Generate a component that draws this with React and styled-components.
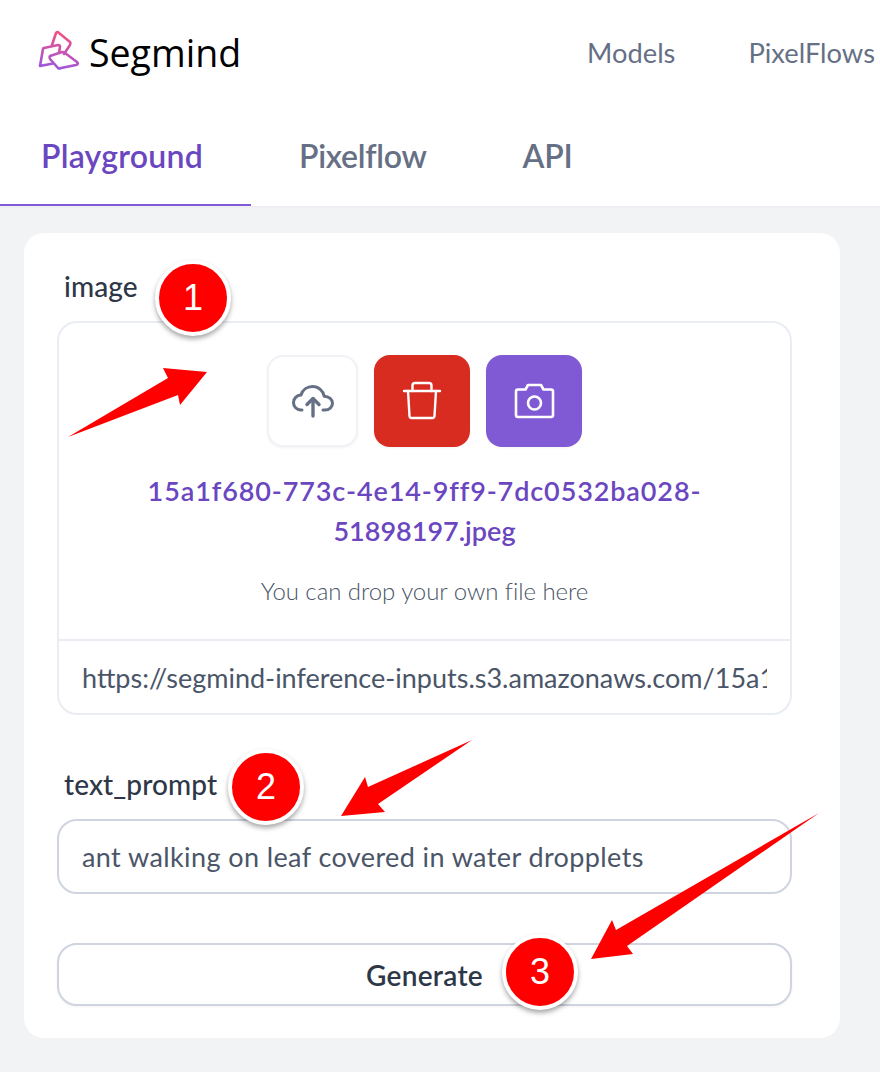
import styled, { createGlobalStyle } from "styled-components";

const GlobalStyle = createGlobalStyle`
	html, body {
		margin: 0;
		padding: 0;
		background: #fff;
	}
	* {
		box-sizing: border-box;
	}
`;

const Page = styled.div`
	position: relative;
	width: 880px;
	height: 1072px;
	overflow: hidden;
	font-family: "Lato", "Open Sans", sans-serif;
	color: #2d3748;
	background: #fff;
`;

const Header = styled.header`
	display: flex;
	align-items: center;
	justify-content: space-between;
	height: 106px;
	padding: 0 5px 2px 38px;
`;

const Brand = styled.div`
	display: flex;
	align-items: center;
	gap: 9px;
	font-family: "Open Sans", sans-serif;
	font-size: 37.5px;
	color: #000;
`;

const Nav = styled.nav`
	display: flex;
	gap: 73px;
	font-size: 27.3px;
	color: #667085;
`;

const TabStrip = styled.div`
	display: flex;
	height: 102px;
	border-bottom: 2px solid #edeff3;
`;

const Tab = styled.div`
	height: 100px;
	margin-bottom: -2px;
	padding: 30px 48px 0;
	font-size: 32px;
	font-weight: 600;
	letter-spacing: ${(p) => (p.$active ? "0.25px" : "-0.3px")};
	color: ${(p) => (p.$active ? "#6b46c1" : "#667085")};
	border-bottom: 2px solid ${(p) => (p.$active ? "#805ad5" : "transparent")};

	&:first-child {
		padding-left: 41px;
	}
`;

const Main = styled.main`
	height: 864px;
	padding: 25px 40px 34px 24px;
	background: #f2f3f5;
`;

const Card = styled.section`
	display: flex;
	flex-direction: column;
	height: 805px;
	padding: 34px 48px 0 33px;
	background: #fff;
	border-radius: 20px;
`;

const Label = styled.label`
	height: 54px;
	padding: 0 7px;
	font-size: 28px;
	font-weight: 500;
	letter-spacing: 0.1px;
	line-height: 38px;
	color: #2d3748;
`;

const DropBox = styled.div`
	display: flex;
	flex-direction: column;
	height: 394px;
	margin-bottom: 50px;
	border: 2px solid #e9edf3;
	border-radius: 20px;
`;

const DropArea = styled.div`
	display: flex;
	flex: 1;
	flex-direction: column;
	align-items: center;
	padding-top: 32px;
	border-bottom: 2px solid #e9edf3;
`;

const IconRow = styled.div`
	display: flex;
	gap: 16px;
	margin-bottom: 24px;
`;

const IconButton = styled.button`
	display: flex;
	align-items: center;
	justify-content: center;
	width: ${(p) => (p.$variant === "upload" ? "91px" : "96px")};
	height: 92px;
	padding: 0;
	color: ${(p) => (p.$variant === "upload" ? "#667085" : "#fff")};
	background: ${(p) =>
		p.$variant === "delete" ? "#d82c20" : p.$variant === "capture" ? "#805ad5" : "#fff"};
	border: ${(p) => (p.$variant === "upload" ? "2px solid #f0f2f6" : "none")};
	border-radius: 16px;
	box-shadow: 0 1px 3px rgba(0, 0, 0, 0.05);
`;

const FileName = styled.div`
	width: 620px;
	font-size: 27px;
	font-weight: 600;
	line-height: 40px;
	text-align: center;
	color: #6b46c1;
`;

const FileLine = styled.div`
	letter-spacing: ${(p) => p.$tracking || 0}px;
`;

const Hint = styled.div`
	margin-top: 22px;
	font-size: 24px;
	font-weight: 300;
	letter-spacing: -0.05px;
	line-height: 36px;
	color: #4a5568;
`;

const TextField = styled.input`
	width: 100%;
	height: ${(p) => (p.$bordered ? "75px" : "72px")};
	padding: 0 23px;
	font-family: inherit;
	font-size: 27px;
	letter-spacing: ${(p) => (p.$bordered ? "0.4px" : "0")};
	color: #4a5568;
	background: transparent;
	border: ${(p) => (p.$bordered ? "2px solid #cfd4e0" : "none")};
	border-radius: 20px;
	outline: none;
`;

const GenerateButton = styled.button`
	height: 63px;
	margin-top: 49px;
	font-family: inherit;
	font-size: 28px;
	font-weight: 600;
	letter-spacing: 0.3px;
	color: #2d3748;
	background: #fff;
	border: 2px solid #cfd4e0;
	border-radius: 20px;
	box-shadow: 0 1px 3px rgba(0, 0, 0, 0.05);
`;

const Badge = styled.div`
	position: absolute;
	left: ${(p) => p.$x - 38}px;
	top: ${(p) => p.$y - 38}px;
	display: flex;
	align-items: center;
	justify-content: center;
	width: 76px;
	height: 76px;
	font-family: "Liberation Sans", sans-serif;
	font-size: 36px;
	color: #fff;
	background: #fe0000;
	border: 4px solid #fff;
	border-radius: 50%;
	box-shadow: 0 3px 5px rgba(0, 0, 0, 0.35);
`;

const ArrowLayer = styled.svg`
	position: absolute;
	top: 0;
	left: 0;
	pointer-events: none;
`;

function Logo() {
	return (
		<svg width="42" height="54" viewBox="38 25 42 54" fill="none">
			<defs>
				<linearGradient id="logoGrad" gradientUnits="userSpaceOnUse" x1="60" y1="30" x2="52" y2="70">
					<stop offset="0" stopColor="#f8527a" />
					<stop offset="1" stopColor="#9a56e2" />
				</linearGradient>
			</defs>
			<g stroke="url(#logoGrad)" strokeWidth="2.6" strokeLinejoin="round" strokeLinecap="round">
				<path d="M52 45L56 33Q57 31 59 33L70 42Q71 43 70 45L64 54" />
				<path d="M44 48L58 45Q60 45 60 47L59 53M40 66L43 49Q43 48 44 48M40 66L53 63.5" />
				<path d="M50 56L62 52Q64 52 65 53L77 62Q79 64 76 65L61 68Q59 69 58 68L50 59Q49 57 50 56Z" />
			</g>
		</svg>
	);
}

function UploadIcon() {
	return (
		<svg width="44" height="44" viewBox="0 0 44 44" fill="none" stroke="currentColor" strokeWidth="3" strokeLinecap="round" strokeLinejoin="round">
			<path d="M11 31H10C5.5 31 2.5 27.6 2.5 23.5C2.5 19.5 5.6 16.2 10 16C11.6 10.6 16.4 7.5 21.5 7.5C27.4 7.5 32.3 11.8 33.2 17.2C38 17.4 41.5 20.4 41.5 24.2C41.5 28 38.2 31 34 31H32" />
			<path d="M22 37V20" strokeWidth="3.4" />
			<path d="M16 25.5L22 19.5L28 25.5" strokeWidth="3.4" />
		</svg>
	);
}

function TrashIcon() {
	return (
		<svg width="40" height="40" viewBox="0 1 40 40" fill="none" stroke="currentColor" strokeWidth="2.4" strokeLinecap="round" strokeLinejoin="round">
			<path d="M2 11H38" />
			<path d="M10.5 11V5.5C10.5 4 11.5 3 13 3H27C28.5 3 29.5 4 29.5 5.5V11" />
			<path d="M6 11L7.5 36C7.6 37.4 8.5 38 9.5 38H30.5C31.5 38 32.4 37.4 32.5 36L34 11" />
		</svg>
	);
}

function CameraIcon() {
	return (
		<svg width="42" height="38" viewBox="0 0 42 38" fill="none" stroke="currentColor" strokeWidth="2.6" strokeLinecap="round" strokeLinejoin="round">
			<path d="M3 9.5C3 8.4 3.9 7.5 5 7.5H12.5L15 3H28L30.5 7.5H38C39.1 7.5 40 8.4 40 9.5V33C40 34.1 39.1 35 38 35H5C3.9 35 3 34.1 3 33Z" />
			<circle cx="21.5" cy="21" r="6.5" />
		</svg>
	);
}

export default function App() {
	return (
		<Page>
			<GlobalStyle />
			<Header>
				<Brand>
					<Logo />
					Segmind
				</Brand>
				<Nav>
					<span>Models</span>
					<span>PixelFlows</span>
				</Nav>
			</Header>
			<TabStrip>
				<Tab $active>Playground</Tab>
				<Tab>Pixelflow</Tab>
				<Tab>API</Tab>
			</TabStrip>
			<Main>
				<Card>
					<Label>image</Label>
					<DropBox>
						<DropArea>
							<IconRow>
								<IconButton $variant="upload">
									<UploadIcon />
								</IconButton>
								<IconButton $variant="delete">
									<TrashIcon />
								</IconButton>
								<IconButton $variant="capture">
									<CameraIcon />
								</IconButton>
							</IconRow>
							<FileName>
								<FileLine $tracking={0.88}>15a1f680-773c-4e14-9ff9-7dc0532ba028-</FileLine>
								<FileLine>51898197.jpeg</FileLine>
							</FileName>
							<Hint>You can drop your own file here</Hint>
						</DropArea>
						<TextField
							readOnly
							value="https://segmind-inference-inputs.s3.amazonaws.com/15a1f680-773c-4e14-9ff9-7dc0532ba028-51898197.jpeg"
						/>
					</DropBox>
					<Label>text_prompt</Label>
					<TextField $bordered readOnly value="ant walking on leaf covered in water dropplets" />
					<GenerateButton>Generate</GenerateButton>
				</Card>
			</Main>
			<ArrowLayer width="880" height="1072" fill="#fe0000" strokeLinejoin="round">
				<polygon points="68,437 168,378 163,368 207,372 180,405 178,395" />
				<polygon points="472,740 368,787 365,777 341,816 385,812 378,804" />
				<polygon points="819,813 616,930 612,920 591,959 633,954 627,946" />
			</ArrowLayer>
			<Badge $x={193} $y={298}>1</Badge>
			<Badge $x={266} $y={787}>2</Badge>
			<Badge $x={540} $y={972}>3</Badge>
		</Page>
	);
}
